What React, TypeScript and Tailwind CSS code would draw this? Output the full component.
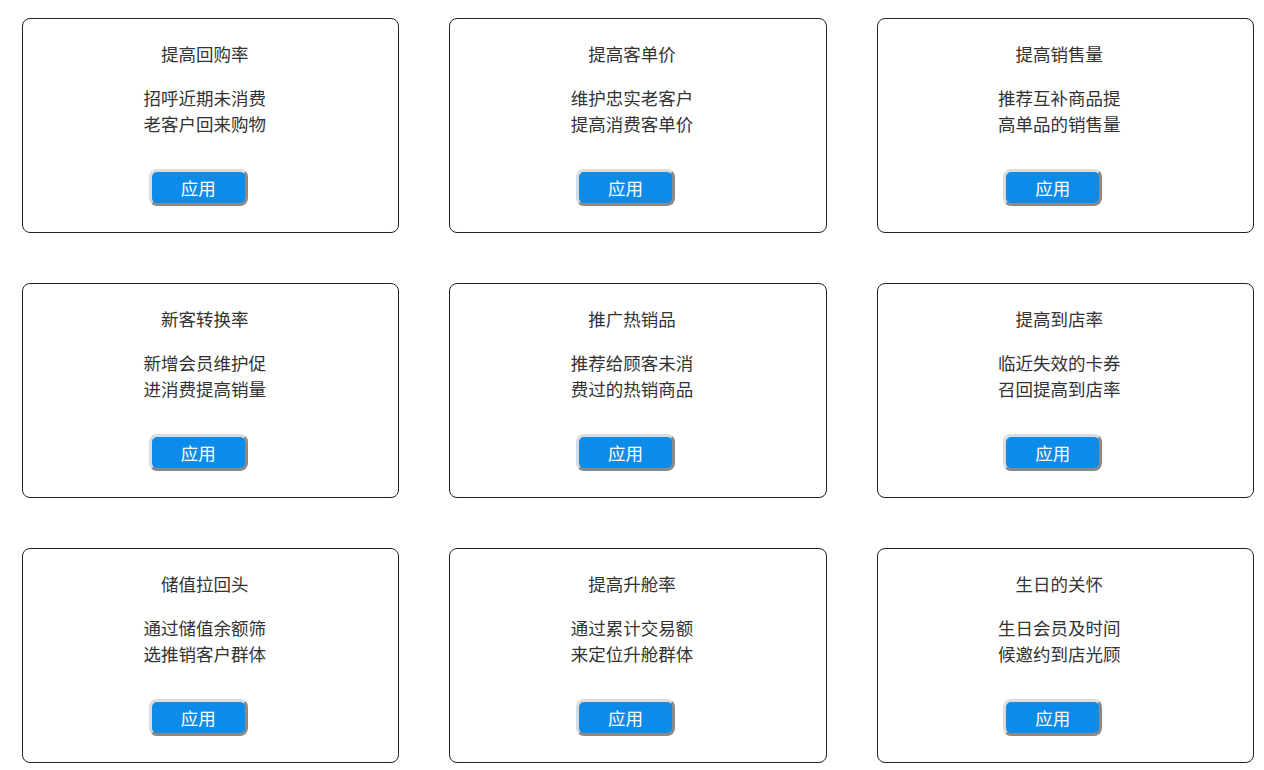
import React from "react";

const items = [
  { t: "提高回购率", a: "招呼近期未消费", b: "老客户回来购物" },
  { t: "提高客单价", a: "维护忠实老客户", b: "提高消费客单价" },
  { t: "提高销售量", a: "推荐互补商品提", b: "高单品的销售量" },
  { t: "新客转换率", a: "新增会员维护促", b: "进消费提高销量" },
  { t: "推广热销品", a: "推荐给顾客未消", b: "费过的热销商品" },
  { t: "提高到店率", a: "临近失效的卡券", b: "召回提高到店率" },
  { t: "储值拉回头", a: "通过储值余额筛", b: "选推销客户群体" },
  { t: "提高升舱率", a: "通过累计交易额", b: "来定位升舱群体" },
  { t: "生日的关怀", a: "生日会员及时间", b: "候邀约到店光顾" },
];

export default function App() {
  return (
    <div
      className="w-[1264px] h-[770px] bg-white pl-[22px] pr-[10px] pt-[18px]"
      style={{ fontFamily: '"Noto Sans CJK SC", "Microsoft YaHei", sans-serif' }}
    >
      <div className="grid grid-cols-3 gap-x-[50px] gap-y-[50px]">
        {items.map((it) => (
          <div
            key={it.t}
            className="h-[215px] border border-[#222] rounded-[8px] flex flex-col items-center pt-[25px] pr-[12px] text-[#333]"
          >
            <div className="text-[17.5px] leading-[20px]">{it.t}</div>
            <div className="mt-[21px] text-[17.5px] leading-[26px] text-center">
              <div>{it.a}</div>
              <div>{it.b}</div>
            </div>
            <button className="mt-[32px] mr-[13px] w-[99px] h-[37px] box-border shrink-0 rounded-[8px] bg-[#0d8be8] text-white text-[17.5px] leading-[20px] border-[3px] border-solid border-t-[#dcdcdc] border-l-[#dcdcdc] border-b-[#8a8a8a] border-r-[#8a8a8a]">
              应用
            </button>
          </div>
        ))}
      </div>
    </div>
  );
}
